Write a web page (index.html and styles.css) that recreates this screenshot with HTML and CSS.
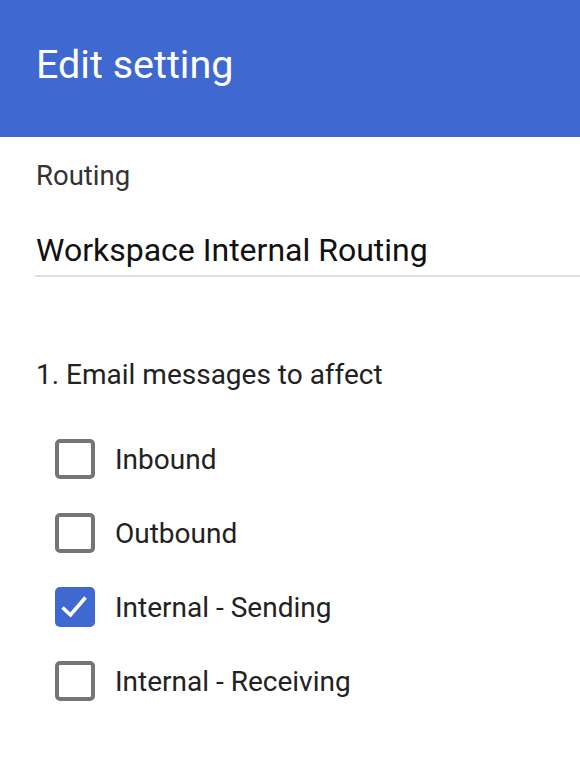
FILE: index.html
```html
<!DOCTYPE html>
<html lang="en">
<head>
  <meta charset="UTF-8">
  <title>Edit setting</title>
  <link rel="stylesheet" href="styles.css">
</head>
<body>
<div class="header">
  <h1 class="title">Edit setting</h1>
</div>

<div class="content">
  <div class="field">
    <div class="field-label">Routing</div>
    <div class="field-value">Workspace Internal Routing</div>
  </div>

  <div class="section">
    <div class="section-title">1. Email messages to affect</div>
    <ul class="options">
      <li class="option">
        <span class="box"></span>
        <span class="option-label">Inbound</span>
      </li>
      <li class="option">
        <span class="box"></span>
        <span class="option-label">Outbound</span>
      </li>
      <li class="option">
        <span class="box checked">
          <svg viewBox="0 0 40 40" width="40" height="40">
            <path d="M7.5 20.5l8 7.5L30.5 10.5" fill="none" stroke="#fff" stroke-width="3.6"/>
          </svg>
        </span>
        <span class="option-label">Internal - Sending</span>
      </li>
      <li class="option">
        <span class="box"></span>
        <span class="option-label">Internal - Receiving</span>
      </li>
    </ul>
  </div>
</div>
</body>
</html>
```

FILE: styles.css
```css
* {
  margin: 0;
  padding: 0;
  box-sizing: border-box;
}

body {
  font-family: Roboto, "Liberation Sans", sans-serif;
  background-color: #fff;
  color: #212121;
}

.header {
  height: 137px;
  background-color: #3f68d0;
  padding: 45px 0 0 36px;
}

.title {
  font-size: 39.5px;
  line-height: 40px;
  font-weight: 400;
  color: #fff;
}

.content {
  padding-left: 35px;
}

.field {
  padding-top: 24px;
}

.field-label {
  font-size: 27.5px;
  line-height: 30px;
  color: #333;
  padding-left: 1px;
}

.field-value {
  margin-top: 39px;
  padding: 0 0 5px 1px;
  font-size: 32px;
  line-height: 40px;
  color: #111;
  border-bottom: 2px solid #e0e0e0;
}

.section {
  padding-top: 83px;
}

.section-title {
  font-size: 28px;
  line-height: 30px;
  color: #222;
  padding-left: 1px;
}

.options {
  list-style: none;
  padding: 32px 0 0 20px;
}

.option {
  display: flex;
  align-items: center;
  gap: 20px;
  height: 74px;
}

.box {
  width: 40px;
  height: 40px;
  border: 4px solid #757575;
  border-radius: 5px;
  flex-shrink: 0;
}

.box.checked {
  background-color: #3f68d0;
  border: none;
}

.box svg {
  display: block;
}

.option-label {
  font-size: 28px;
  color: #222;
}
```
